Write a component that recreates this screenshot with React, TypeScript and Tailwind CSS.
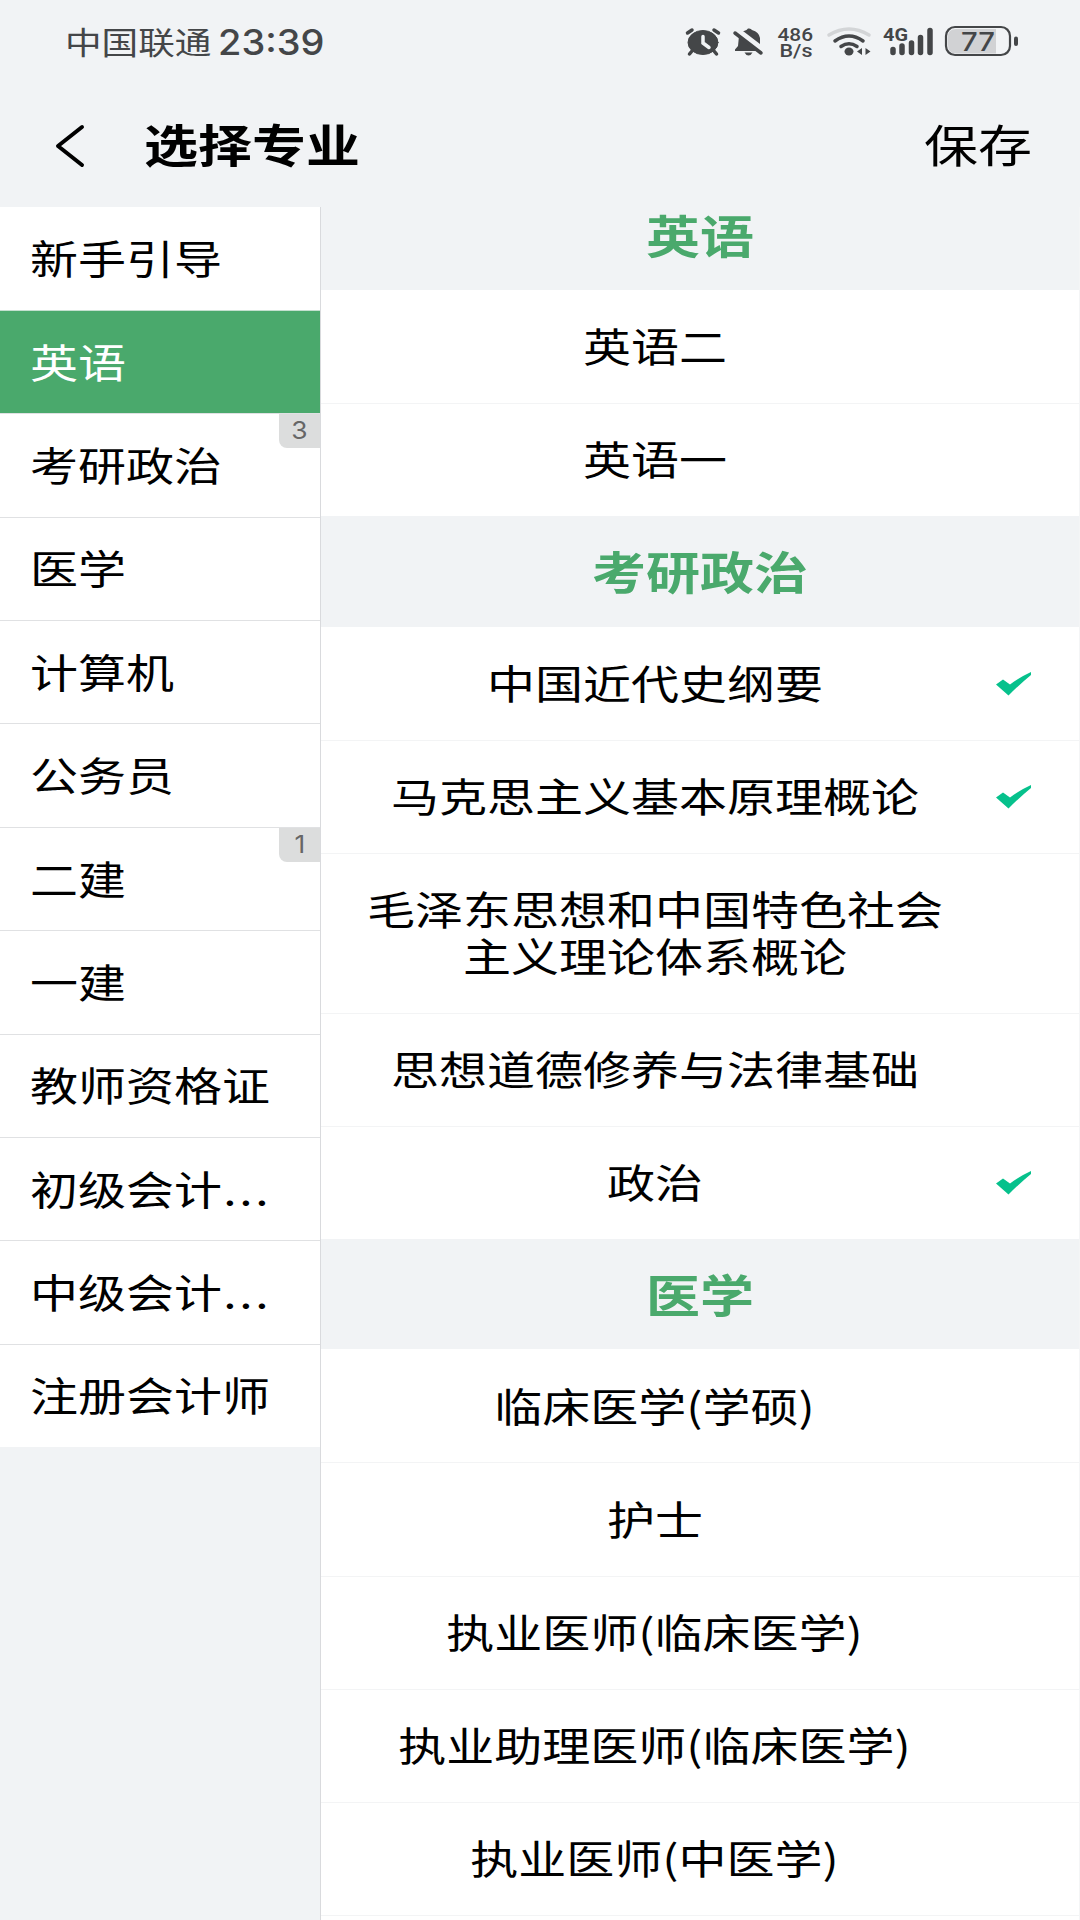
import React from 'react';

const subjects: { name: string; badge?: number; active?: boolean; truncated?: boolean }[] = [
  { name: '新手引导' },
  { name: '英语', active: true },
  { name: '考研政治', badge: 3 },
  { name: '医学' },
  { name: '计算机' },
  { name: '公务员' },
  { name: '二建', badge: 1 },
  { name: '一建' },
  { name: '教师资格证' },
  { name: '初级会计', truncated: true },
  { name: '中级会计', truncated: true },
  { name: '注册会计师' },
];

const groups: { title: string; items: { lines: string[]; checked?: boolean }[] }[] = [
  { title: '英语', items: [{ lines: ['英语二'] }, { lines: ['英语一'] }] },
  {
    title: '考研政治',
    items: [
      { lines: ['中国近代史纲要'], checked: true },
      { lines: ['马克思主义基本原理概论'], checked: true },
      { lines: ['毛泽东思想和中国特色社会', '主义理论体系概论'] },
      { lines: ['思想道德修养与法律基础'] },
      { lines: ['政治'], checked: true },
    ],
  },
  {
    title: '医学',
    items: [
      { lines: ['临床医学(学硕)'] },
      { lines: ['护士'] },
      { lines: ['执业医师(临床医学)'] },
      { lines: ['执业助理医师(临床医学)'] },
      { lines: ['执业医师(中医学)'] },
    ],
  },
];

function Check() {
  return (
    <svg className="absolute right-[47px] top-1/2 h-[24px] w-[36px] -translate-y-1/2" viewBox="0 0 36 24" fill="#06c18c">
      <path d="M0 12.500 7 7.500 14 12.500Q24 5 35 0V3Q24 12 12.500 23.500Z" />
    </svg>
  );
}

function StatusBar() {
  return (
    <div className="flex h-[84px] shrink-0 items-start justify-between pl-[65px] text-[#444648]">
      <div className="flex pt-[20px]">
        <span className="-mt-px w-[153px] shrink-0 whitespace-nowrap text-[30.5px] leading-[44px]">
          <span className="inline-block origin-left scale-x-[1.2]">中国联通</span>
        </span>
        <span className="whitespace-nowrap font-['Inter'] text-[35px] font-medium leading-[45px]">
          <span className="inline-block origin-left scale-x-[1.085]">23:39</span>
        </span>
      </div>
      <svg className="mr-[50px] mt-[20px] h-[44px] w-[350px]" viewBox="680 20 350 44" fill="#444648">
        <g stroke="#444648" strokeLinecap="round">
          <ellipse cx="703" cy="42.500" rx="15" ry="12" />
          <path d="M687.500 33 692 30M718.500 33 714 30M692 51l-2.500 3M714 51l2.500 3" strokeWidth="3.500" />
          <path d="M703 36.500V43l6 4.500" stroke="#f1f3f5" strokeWidth="3.500" fill="none" />
        </g>
        <path d="M744 31Q747 30 748 28.500Q751 28 752 30Q759 32 760 38V44L743 31ZM739 36 757 51H735V49.500L738 46Z" />
        <path d="M744.500 52.500h8q-1.500 3-4 3t-4-3Z" />
        <path d="M735 33 761 53" stroke="#444648" strokeWidth="3.500" strokeLinecap="round" />
        <g fontFamily="Roboto" fontSize="19" fontWeight="500">
          <text x="777.500" y="41" textLength="35.500" lengthAdjust="spacingAndGlyphs">486</text>
          <text x="779.500" y="56.500" textLength="33" lengthAdjust="spacingAndGlyphs">B/s</text>
        </g>
        <g fill="none" strokeLinecap="round" strokeWidth="3.500">
          <path d="M829 35Q849 23 869 35" stroke="#d3d5d7" />
          <path d="M835 41Q849 31 863 41M841 46.500Q849 41 857 46.500" stroke="#444648" />
        </g>
        <ellipse cx="849" cy="51.500" rx="4.500" ry="4" />
        <path d="M857 51.500 862 48v7ZM870.500 51.500 865.500 48v7Z" />
        <text x="883" y="41" fontFamily="Roboto" fontSize="18" fontWeight="700" textLength="25" lengthAdjust="spacingAndGlyphs">4G</text>
        <g stroke="#444648" strokeWidth="5.500" strokeLinecap="round">
          <path d="M893 49.500V52.500M902 46V52.500M911.500 43V52.500M920.500 37.500V52.500M930 30.500V52.500" />
        </g>
        <path d="M956 29H996V53.500H956Q948 53.500 948 45V37Q948 29 956 29Z" fill="#d1d2d4" />
        <rect x="946" y="27" width="64" height="28" rx="9" fill="none" stroke="#444648" strokeWidth="2.200" />
        <rect x="1014" y="36.500" width="4" height="9.500" rx="2" />
        <text x="961" y="51" fontFamily="Inter" fontSize="26" fontWeight="500" textLength="34" lengthAdjust="spacingAndGlyphs">77</text>
      </svg>
    </div>
  );
}

export default function App() {
  return (
    <div className="flex h-[1920px] w-[1080px] flex-col overflow-hidden bg-[#f1f3f5] font-['Noto_Sans_CJK_SC',sans-serif] text-black">
      <StatusBar />
      <header className="flex h-[122.500px] shrink-0 items-start pt-[34px]">
        <svg className="ml-[54px] mt-[6px] h-[44px] w-[32px]" viewBox="0 0 32 44" fill="none" stroke="#000" strokeWidth="4" strokeLinecap="round" strokeLinejoin="round">
          <path d="M28 3 4 22 28 41" />
        </svg>
        <h1 className="ml-[58px] whitespace-nowrap text-[45px] font-bold leading-[52px]">
          <span className="inline-block origin-left scale-x-[1.2]">选择专业</span>
        </h1>
        <button className="ml-auto mr-[48px] whitespace-nowrap text-[45px] leading-[52px]">
          <span className="inline-block origin-right scale-x-[1.2]">保存</span>
        </button>
      </header>
      <div className="flex min-h-0 flex-1">
        <nav className="w-[321px] shrink-0 border-r border-[#d9dadd]">
          {subjects.map((s) => (
            <div
              key={s.name}
              className={`relative flex h-[103.400px] items-center border-t pb-[3px] pl-[30px] text-[40px] first:border-t-0 ${
                s.active ? 'border-[#c4e0cf] bg-[#4aa96c] text-white' : 'border-[#e0e1e3] bg-white'
              }`}
            >
              <span className="origin-left scale-x-[1.2] whitespace-nowrap">
                {s.name}
                {s.truncated && <span className="ml-px tracking-[2.200px]">...</span>}
              </span>
              {s.badge && (
                <span className="absolute right-0 top-0 flex h-[34px] w-[41px] items-center justify-center rounded-bl-[8px] bg-[#dcdddd] font-['Inter'] text-[24px] text-[#666]">
                  <span className="scale-x-[1.1]">{s.badge}</span>
                </span>
              )}
            </div>
          ))}
        </nav>
        <main className="flex min-w-0 flex-1 flex-col overflow-hidden border-r border-[#f4f5f6]">
          {groups.map((g, i) => (
            <section key={g.title} className="shrink-0">
              <h2 className={`flex items-center justify-center text-[45px] font-bold leading-[54px] text-[#4aa96c] ${i === 0 ? 'h-[83.500px] pb-[27px]' : 'h-[110.500px]'}`}>
                <span className="scale-x-[1.2]">{g.title}</span>
              </h2>
              {g.items.map((item, j) => (
                <div
                  key={item.lines[0]}
                  className={`relative flex items-center justify-center border-t bg-white pb-[3px] pr-[90px] text-[40px] leading-[46.700px] ${
                    j === 0 ? 'border-white' : 'border-[#f3f4f5]'
                  } ${item.lines.length > 1 ? 'h-[159.800px]' : 'h-[113.100px]'}`}
                >
                  <span className="scale-x-[1.2] whitespace-nowrap text-center">
                    {item.lines.map((line) => (
                      <span key={line} className="block">{line}</span>
                    ))}
                  </span>
                  {item.checked && <Check />}
                </div>
              ))}
            </section>
          ))}
          <div className="flex-1 border-t border-[#f3f4f5] bg-white" />
        </main>
      </div>
    </div>
  );
}
